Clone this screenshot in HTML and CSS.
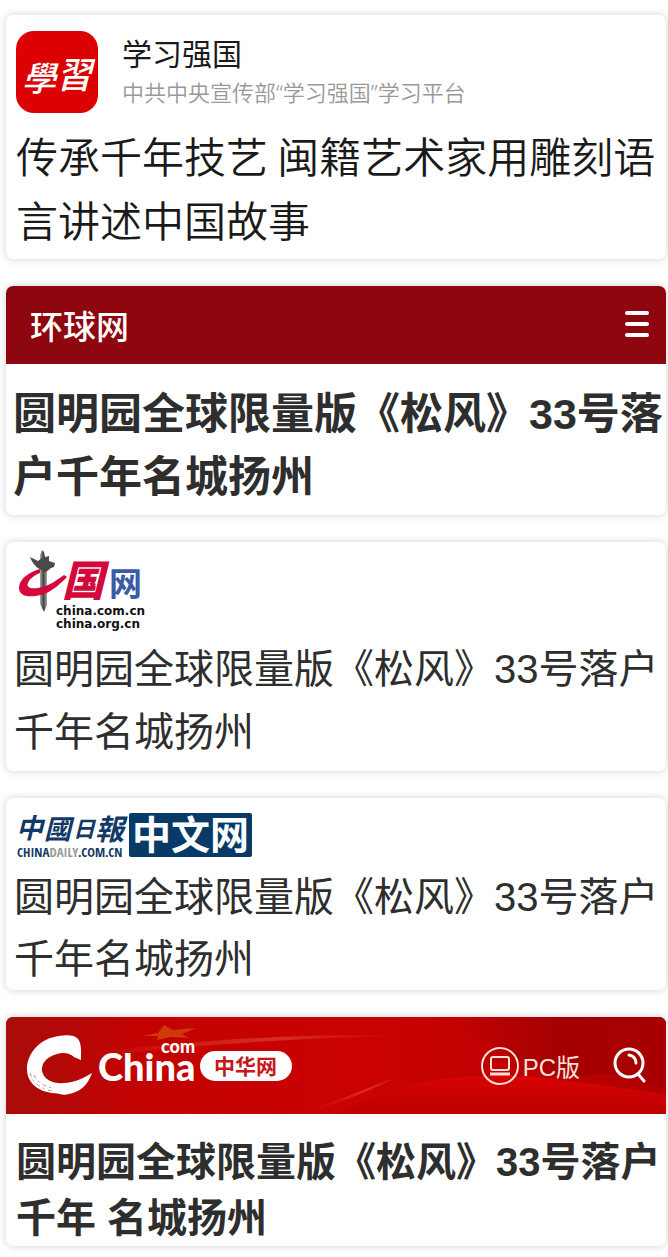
FILE: index.html
```
<!DOCTYPE html>
<html lang="zh-CN">
<head>
  <meta charset="UTF-8">
  <meta name="viewport" content="width=device-width, initial-scale=1.0">
  <title>媒体报道</title>
  <link rel="stylesheet" href="styles.css">
</head>
<body>
<main class="news-list">

  <article class="card card-xuexi">
    <div class="source">
      <svg class="source-icon" viewBox="0 0 82 82" role="img" aria-label="學習">
        <rect width="82" height="82" rx="18" fill="#dc0204"/>
        <text class="brush-thin" x="6" y="60" font-size="34" fill="#fff">學</text>
        <text class="brush-thin" x="40" y="57" font-size="36" fill="#fff">習</text>
      </svg>
      <div class="source-text">
        <p class="source-name">学习强国</p>
        <p class="source-desc">中共中央宣传部“学习强国”学习平台</p>
      </div>
    </div>
    <h2 class="title title-light">传承千年技艺 闽籍艺术家用雕刻语言讲述中国故事</h2>
  </article>

  <article class="card card-huanqiu">
    <header class="bar bar-dark">
      <span class="huanqiu-logo">环球网</span>
      <button class="icon-btn" type="button" aria-label="菜单">
        <svg width="26" height="28" viewBox="0 0 26 28" stroke="#fff" stroke-width="4" stroke-linecap="round">
          <path d="M2 2H22M2 13H22M2 24H22"/>
        </svg>
      </button>
    </header>
    <h2 class="title title-heavy">圆明园全球限量版《松风》33号落户千年名城扬州</h2>
  </article>

  <article class="card card-chinacn">
    <svg class="chinacn-logo" width="130" height="84" viewBox="0 0 130 84" role="img" aria-label="中国网">
      <!-- stone column -->
      <defs>
        <linearGradient id="stone" x1="0" x2="1" y1="0" y2="0">
          <stop offset="0" stop-color="#aaa"/>
          <stop offset=".5" stop-color="#444"/>
          <stop offset="1" stop-color="#aaa"/>
        </linearGradient>
      </defs>
      <path d="M22 5L24 0L26 2L27 6L29 10V55L26 62L22 54V10Z" fill="url(#stone)"/>
      <path d="M12 7L20 11L24 8L31 6V11L37 13L36 17C31 18 31 21 27 22C21 19 16 17 12 7Z" fill="#4a4a4a"/>
      <path d="M22 19C11 22 1 29 1 38C1 46 10 48 23 45C34 42 42 34 49 27L46 25C37 31 32 36 20 38C12 39 8 37 10 33C12 28 17 25 22 23Z" fill="#d3083b"/>
      <text x="44" y="46" font-size="42" font-weight="900" font-style="italic" fill="#d3083b">国</text>
      <text x="91" y="46" font-size="33" font-weight="700" fill="#3a5ba8">网</text>
      <text class="domain" x="38" y="65">china.com.cn</text>
      <text class="domain" x="38" y="78">china.org.cn</text>
    </svg>
    <h2 class="title">圆明园全球限量版《松风》33号落户千年名城扬州</h2>
  </article>

  <article class="card card-daily">
    <svg class="daily-logo" width="238" height="60" viewBox="0 -10 238 60" role="img" aria-label="中国日报中文网">
      <g class="brush" font-size="27" fill="#123a66">
        <text x="0" y="26">中</text>
        <text x="28" y="27">國</text>
        <text x="57" y="25" font-size="22">日</text>
        <text x="79" y="28" font-size="29">報</text>
      </g>
      <text class="daily-url" x="1" y="45">CHINA<tspan fill="#999">DAILY</tspan>.COM.CN</text>
      <rect x="113" y="1" width="123" height="44" rx="2" fill="#083a68"/>
      <text x="116" y="37" font-size="39" font-weight="700" fill="#fff">中文网</text>
    </svg>
    <h2 class="title">圆明园全球限量版《松风》33号落户千年名城扬州</h2>
  </article>

  <article class="card card-chinacom">
    <header class="bar bar-red">
      <svg class="bar-bg" viewBox="0 0 660 97" preserveAspectRatio="none" aria-hidden="true">
        <defs>
          <linearGradient id="red" x1="0" x2="1" y1="0" y2="0">
            <stop offset="0" stop-color="#a90c0a"/>
            <stop offset=".2" stop-color="#c20302"/>
            <stop offset=".55" stop-color="#cb0202"/>
            <stop offset="1" stop-color="#b00000"/>
          </linearGradient>
          <linearGradient id="glow" x1="0" x2="1" y1="0" y2="0">
            <stop offset="0" stop-color="#e85a3a" stop-opacity="0"/>
            <stop offset=".6" stop-color="#e85a3a" stop-opacity=".5"/>
            <stop offset="1" stop-color="#e85a3a" stop-opacity="0"/>
          </linearGradient>
          <linearGradient id="fold" x1="0" x2="0" y1="0" y2="1">
            <stop offset="0" stop-color="#d80404"/>
            <stop offset="1" stop-color="#bc0000"/>
          </linearGradient>
          <linearGradient id="shade" x1="0" x2="1" y1="0" y2="0">
            <stop offset="0" stop-color="#9c0000" stop-opacity="0"/>
            <stop offset=".5" stop-color="#9c0000" stop-opacity=".7"/>
            <stop offset="1" stop-color="#a40000" stop-opacity=".7"/>
          </linearGradient>
        </defs>
        <rect width="660" height="97" fill="url(#red)"/>
        <path d="M330 97C400 58 480 54 540 61C590 68 620 70 660 78V97Z" fill="url(#fold)"/>
        <path d="M450 0C500 44 550 62 575 60C605 52 630 60 660 74V0Z" fill="url(#shade)"/>
        <path d="M80 36C190 24 310 14 395 20C310 19 190 28 80 40Z" fill="url(#glow)"/>
        <path d="M310 90C350 78 370 66 395 59C370 70 350 80 310 93Z" fill="url(#glow)"/>
        <path d="M137 19L152 16L158 8L167 13L190 11L176 17L183 21L165 20L151 23L152 19Z" fill="#d4460c" opacity=".8"/>
      </svg>
      <svg class="chinacom-logo" width="272" height="70" viewBox="0 0 272 70" role="img" aria-label="China.com 中华网">
        <!-- brush swirl -->
        <path d="M55 29L48 26C44 22 37 21 31 23C20 26 15 33 16 40C18 49 27 53 39 52C50 51 58 47 66 42C62 54 54 61 43 63C38 65 32 62 26 62C12 60 1 52 1 38C1 22 14 9 28 6C37 4 48 3 52 8C56 13 55 22 55 29Z" fill="#fff"/>
        <path d="M4 42C7 52 15 58 26 60M8 44C12 53 20 56 28 57" fill="none" stroke="#e08a86" stroke-dasharray="4 3 2 4"/>
        <text class="latin" x="72" y="50" font-size="38">China</text>
        <text class="latin" x="135" y="22" font-size="18">com</text>
        <rect x="174" y="20" width="92" height="30" rx="15" fill="#fff"/>
        <text x="188" y="43" font-size="21" font-weight="700" fill="#c8161d">中华网</text>
      </svg>
      <nav class="bar-nav">
        <a class="pc-link" href="#">
          <svg width="40" height="40" viewBox="0 0 40 40" fill="none" stroke="#ffe0dc" stroke-width="2">
            <circle cx="20" cy="20" r="18"/>
            <rect x="11" y="11" width="18" height="13" rx="2"/>
            <path d="M10 28H30" stroke-width="3"/>
          </svg>
          PC版
        </a>
        <button class="icon-btn" type="button" aria-label="搜索">
          <svg width="34" height="38" viewBox="0 0 34 38" fill="none" stroke="#fff" stroke-width="3" stroke-linecap="round">
            <circle cx="17" cy="16" r="14"/>
            <path d="M26 27L32 34"/>
            <path d="M17 8C22 9 24 12 24 16"/>
          </svg>
        </button>
      </nav>
    </header>
    <h2 class="title title-bold">圆明园全球限量版《松风》33号落户千年 名城扬州</h2>
  </article>

</main>
</body>
</html>
```
FILE: styles.css
```
* {
  margin: 0;
  padding: 0;
  box-sizing: border-box;
}

body {
  font-family: "Liberation Sans", "Noto Sans CJK SC", sans-serif;
  background: #fff;
  color: #2e2e2e;
}

svg {
  display: block;
  flex-shrink: 0;
}

.news-list {
  display: flex;
  flex-direction: column;
  gap: 27px;
  padding: 15px 2px 11px 6px;
}

.card {
  background: #fff;
  border-radius: 7px;
  box-shadow: 0 0 9px rgba(0, 0, 0, 0.18);
  overflow: hidden;
}

.title {
  padding: 0 2px 0 8px;
  font-size: 40px;
  font-weight: 400;
  line-height: 63px;
}

/* 学习强国 */
.card-xuexi {
  padding: 16px 0 8px;
}

.source {
  display: flex;
  gap: 24px;
  padding-left: 10px;
}

.source-icon {
  width: 82px;
  height: 82px;
}

.source-name {
  margin-top: 3px;
  font-size: 30px;
  line-height: 42px;
  color: #1a1a1a;
}

.source-desc {
  font-family: "Noto Sans", "Noto Sans CJK SC", sans-serif;
  font-size: 22px;
  font-weight: 350;
  line-height: 32px;
  color: #999;
}

.title-light {
  margin-top: 10px;
  padding-left: 10px;
  font-family: "Noto Sans CJK SC", sans-serif;
  font-size: 42px;
  font-weight: 350;
  line-height: 64px;
  color: #1a1a1a;
}

.brush,
.brush-thin {
  font-family: "Noto Sans CJK TC", sans-serif;
  font-style: italic;
  font-weight: 700;
}

.brush-thin {
  font-weight: 500;
}

/* top bars */
.bar {
  position: relative;
  display: flex;
  align-items: center;
  justify-content: space-between;
  color: #fff;
}

.bar-dark {
  height: 78px;
  padding: 0 15px 0 24px;
  background: #8e060e;
}

.icon-btn {
  background: none;
  border: none;
  cursor: pointer;
}

.huanqiu-logo {
  font-size: 33px;
  font-weight: 500;
}

.title-heavy {
  padding: 19px 0 6px 7px;
  font-size: 43px;
  font-weight: 700;
}

/* 中国网 */
.card-chinacn {
  padding: 8px 0 7px;
}

.chinacn-logo {
  margin: 0 0 4px 12px;
}

.domain {
  font-family: "DejaVu Sans", sans-serif;
  font-size: 12px;
  font-weight: 700;
  fill: #111;
}

/* 中国日报 */
.card-daily {
  padding-top: 4px;
}

.card-daily .title {
  line-height: 62px;
}

.daily-logo {
  margin: 0 0 4px 10px;
}

.daily-url {
  font-family: "Liberation Sans Narrow", "Open Sans Condensed", "Liberation Sans", sans-serif;
  font-size: 13px;
  font-weight: 700;
  fill: #123a66;
}

/* 中华网 */
.bar-red {
  height: 97px;
  padding: 0 20px;
  background: #c20302;
}

.bar-bg {
  position: absolute;
  top: 0;
  left: 0;
  width: 100%;
  height: 100%;
}

.chinacom-logo,
.bar-nav {
  position: relative;
}

.latin {
  font-family: Lato, sans-serif;
  font-weight: 900;
  fill: #fff;
}

.bar-nav {
  display: flex;
  align-items: center;
  gap: 32px;
}

.pc-link {
  display: flex;
  align-items: center;
  gap: 3px;
  font-size: 24px;
  color: #ffe0dc;
  text-decoration: none;
}

.title-bold {
  padding: 20px 0 0 10px;
  font-weight: 700;
  line-height: 56px;
}
```
